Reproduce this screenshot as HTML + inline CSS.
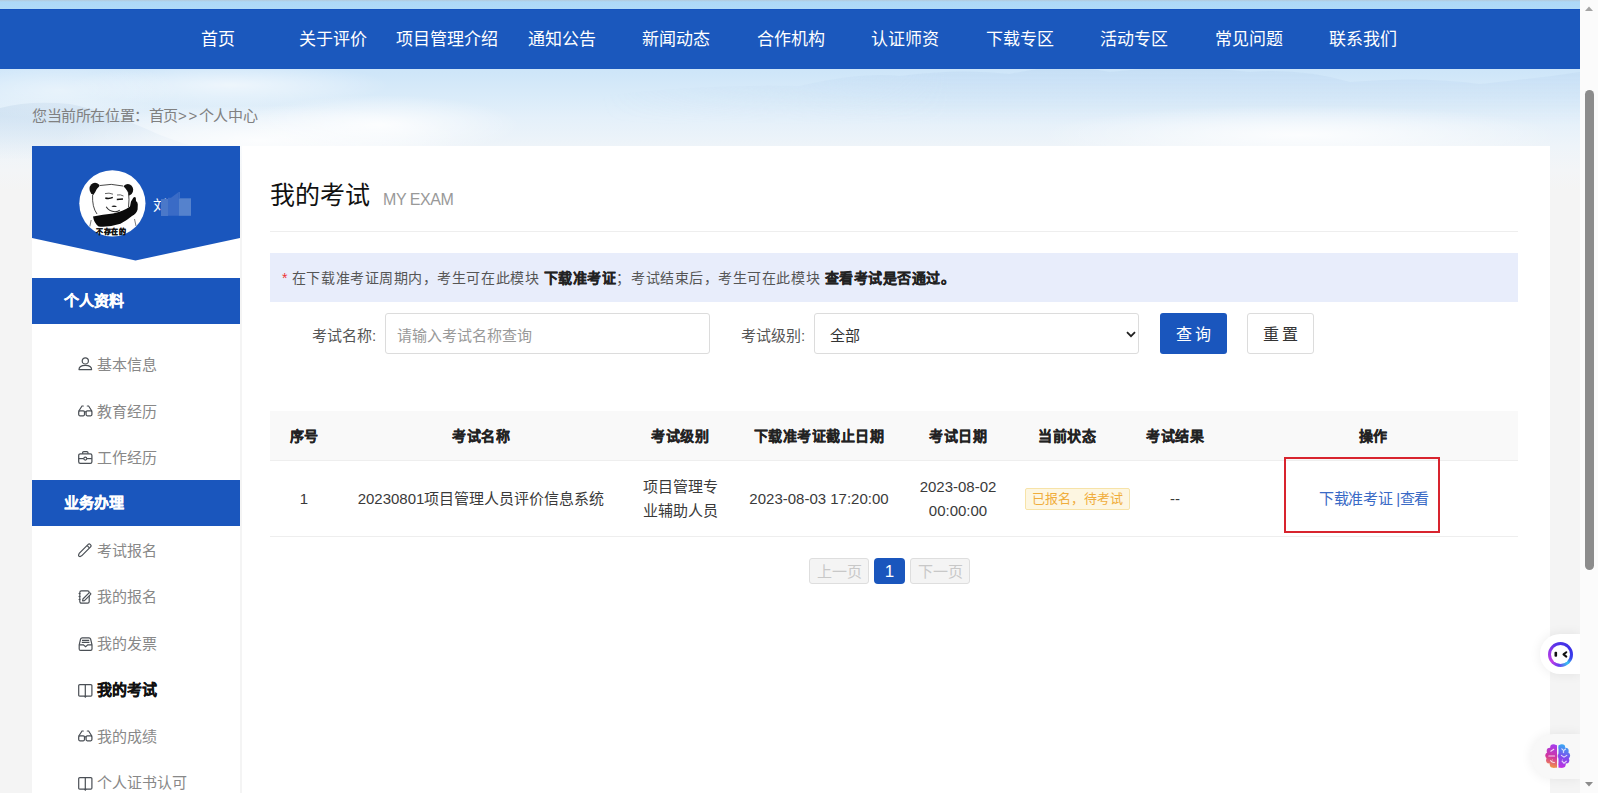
<!DOCTYPE html>
<html lang="zh-CN"><head><meta charset="utf-8">
<style>
*{margin:0;padding:0;box-sizing:border-box}
html,body{width:1598px;height:793px;overflow:hidden}
body{position:relative;background:#f4f4f4;font-family:"Liberation Sans",sans-serif;color:#333}
.abs{position:absolute}
#nav{left:0;top:9px;width:1580px;height:60px;background:#1b58bd;border-top:1px solid #1451be}
#nav .it{position:absolute;top:0;height:60px;line-height:60px;width:114.5px;text-align:center;color:#fff;font-size:17px}
#crumb{left:32px;top:105px;font-size:15px;letter-spacing:-0.4px;color:#808080;line-height:22px}
#side{left:32px;top:146px;width:208px;height:660px;background:#fff}
#main{left:242px;top:146px;width:1308px;height:660px;background:#fff}
#scroll{left:1580px;top:0;width:18px;height:793px;background:#fbfbfb}
.menu{position:absolute;left:0;width:208px;height:46px;background:#1a56bd;color:#fff;font-weight:bold;font-size:15px;line-height:46px;padding-left:32px}
.mt{position:absolute;left:65px;height:24px;line-height:24px;font-size:15px;color:#888;white-space:nowrap}
.ic{position:absolute}
.mi svg{position:absolute;left:0;top:5px}
.mi span{position:absolute;left:20px;top:0}
.th{position:absolute;top:279px;width:0;white-space:nowrap;font-size:14px;letter-spacing:0.5px;font-weight:bold;color:#222;line-height:22px;display:flex;justify-content:center}
.td{position:absolute;width:0;white-space:nowrap;font-size:15px;color:#3a3a3a;line-height:22px;display:flex;justify-content:center;text-align:center}
b,.menu,.th,.bold{-webkit-text-stroke:0.25px currentColor}
</style></head><body>
<svg id="sky" class="abs" style="left:0;top:0" width="1580" height="190" viewBox="0 0 1580 190">
  <defs>
    <linearGradient id="skyg" x1="0" y1="0" x2="0" y2="1">
      <stop offset="0" stop-color="#b4c8da"/><stop offset="0.01" stop-color="#acd8f8"/>
      <stop offset="0.36" stop-color="#cde5f9"/><stop offset="0.5" stop-color="#d9ebf9"/>
      <stop offset="0.62" stop-color="#e4f0fa"/><stop offset="0.77" stop-color="#eef4f9"/>
      <stop offset="0.9" stop-color="#f3f5f7"/><stop offset="1" stop-color="#f4f4f4"/>
    </linearGradient>
    <radialGradient id="cl" cx="0.5" cy="0.5" r="0.5"><stop offset="0" stop-color="#fff" stop-opacity="0.85"/><stop offset="1" stop-color="#fff" stop-opacity="0"/></radialGradient>
    <radialGradient id="mt" cx="0.5" cy="0.5" r="0.5"><stop offset="0" stop-color="#b9d5ef" stop-opacity="0.6"/><stop offset="1" stop-color="#b9d5ef" stop-opacity="0"/></radialGradient>
  </defs>
  <rect width="1580" height="190" fill="url(#skyg)"/>
  <linearGradient id="mtg" x1="0" y1="0" x2="0" y2="1"><stop offset="0" stop-color="#bcd6f0" stop-opacity="0.4"/><stop offset="1" stop-color="#bcd6f0" stop-opacity="0"/></linearGradient>
  <mask id="mfade"><linearGradient id="hf" gradientUnits="userSpaceOnUse" x1="600" y1="0" x2="950" y2="0"><stop offset="0" stop-color="#000"/><stop offset="1" stop-color="#fff"/><stop offset="1" stop-color="#fff"/></linearGradient><rect x="0" y="0" width="1580" height="190" fill="url(#hf)"/></mask>
  <path mask="url(#mfade)" d="M600 96 Q700 84 800 86 Q860 72 900 76 Q960 68 1010 74 Q1060 62 1110 72 Q1180 64 1250 72 Q1300 68 1350 82 Q1420 76 1480 84 Q1540 78 1580 72 V125 H600Z" fill="url(#mtg)"/>
  <ellipse cx="230" cy="85" rx="160" ry="22" fill="url(#cl)" opacity="0.7"/>
  <linearGradient id="lm" x1="0" y1="0" x2="0" y2="1"><stop offset="0" stop-color="#c6dbee" stop-opacity="0.7"/><stop offset="1" stop-color="#c6dbee" stop-opacity="0"/></linearGradient>
  <path d="M0 108 Q30 100 70 104 Q110 112 160 135 Q200 150 240 160 H0Z" fill="url(#lm)"/>
  <ellipse cx="260" cy="140" rx="200" ry="35" fill="url(#cl)"/>
  <ellipse cx="380" cy="125" rx="140" ry="30" fill="url(#cl)"/>
  <ellipse cx="1300" cy="135" rx="260" ry="30" fill="url(#cl)"/>
  <ellipse cx="60" cy="90" rx="120" ry="30" fill="url(#cl)" opacity="0.5"/>
</svg>
<div id="nav" class="abs">
  <div class="it" style="left:161px">首页</div>
  <div class="it" style="left:275.5px">关于评价</div>
  <div class="it" style="left:390px">项目管理介绍</div>
  <div class="it" style="left:504.5px">通知公告</div>
  <div class="it" style="left:619px">新闻动态</div>
  <div class="it" style="left:733.5px">合作机构</div>
  <div class="it" style="left:848px">认证师资</div>
  <div class="it" style="left:962.5px">下载专区</div>
  <div class="it" style="left:1077px">活动专区</div>
  <div class="it" style="left:1191.5px">常见问题</div>
  <div class="it" style="left:1306px">联系我们</div>
</div>
<div id="crumb" class="abs">您当前所在位置：首页<span style="letter-spacing:1.6px">&gt;&gt;</span>个人中心</div>

<div id="side" class="abs">
  <svg class="abs" style="left:0;top:0" width="208" height="115" viewBox="0 0 208 115"><polygon points="0,0 208,0 208,92 103.5,114.5 0,92" fill="#1a56bd"/></svg>
  <svg class="abs" style="left:47px;top:24px" width="67" height="67" viewBox="0 0 67 67">
    <defs><clipPath id="cc"><circle cx="33.4" cy="33.3" r="33.1"/></clipPath></defs>
    <circle cx="33.4" cy="33.3" r="33.1" fill="#fff"/>
    <g clip-path="url(#cc)">
      <ellipse cx="16" cy="19" rx="5.5" ry="6.2" fill="#111"/>
      <ellipse cx="48.8" cy="19.8" rx="5.4" ry="5.9" fill="#111"/>
      <path d="M21 15.5 Q32 13 44 16 Q49 20 49.8 26 Q50.5 33 49 38 L40 44 Q28 47 18 44 Q13.5 38 13.5 30 Q13.5 25 16 22.5 Q18 18 21 15.5Z" fill="#fff"/>
      <path d="M21 15.5 Q32 13 44 16 M49.5 22 Q50.5 30 49.5 37 M13.6 25 Q13 37 18 44" fill="none" stroke="#333" stroke-width="0.9"/>
      <path d="M26 23.6 q4 -1.2 8 0.6 M38 25 q3.5 -0.8 6.5 1" stroke="#555" stroke-width="0.9" fill="none"/>
      <path d="M26.3 28 q3.8 1.2 7.5 -0.6" stroke="#111" stroke-width="1.6" fill="none"/>
      <path d="M37.8 29.6 q3 -0.2 6.2 -0.6" stroke="#111" stroke-width="1.5" fill="none"/>
      <path d="M32.4 36.2 Q35 34.6 38 36.4 Q35 37.8 32.4 36.2Z" fill="#222"/>
      <path d="M27.2 36.8 Q30 41.5 36 41.8 Q39.5 41.6 40.8 40" stroke="#333" stroke-width="1.1" fill="none"/>
      <path d="M14 46.5 Q24 44.5 34 43.5 Q44 41.5 51 36.5 L52 31.5 L54.5 27.5 Q56.2 26.2 56.8 28 L57 31 Q58.8 32 58.8 34.5 L58.6 39.5 Q57.5 43.5 53 46 Q47 51 41.4 53.8 Q30 57.5 19.6 56.5 Q15 53 14 46.5Z" fill="#0b0b0b"/>
      <path d="M12.2 50 L10.8 56.5 M55.5 49 L57 56" stroke="#444" stroke-width="0.7"/>
    </g>
    <text x="32.2" y="63.8" font-size="7" font-weight="bold" text-anchor="middle" fill="#111" stroke="#111" stroke-width="0.25" font-family="Liberation Sans,sans-serif" letter-spacing="0.4">不存在的</text>
  </svg>
  <div class="abs" style="left:121px;top:48px;font-size:14px;color:#fff;line-height:22px">刘</div>
  <svg class="abs" style="left:129px;top:46px" width="33" height="25" viewBox="0 0 33 25"><rect x="0" y="7" width="7" height="17" fill="#4a78c9"/><polygon points="7,5.7 10,5.7 17.7,0 17.7,23.8 7,23.8" fill="#3a6bc6"/><rect x="17.7" y="6.3" width="12.3" height="17.5" fill="#5582cd"/><rect x="17.7" y="0" width="1.2" height="6.3" fill="#3f70c8"/></svg>
  <div class="menu" style="top:132px">个人资料</div>
  <svg class="ic" style="left:46px;top:211px" width="16" height="16" viewBox="0 0 16 16"><circle cx="7.3" cy="3.9" r="3.1" fill="none" stroke="#4a4f55" stroke-width="1.2"/><path d="M1 12.6 Q1 8.4 7.3 8.4 Q13.6 8.4 13.6 12.6 Z" fill="none" stroke="#4a4f55" stroke-width="1.2" stroke-linejoin="round"/></svg>
  <div class="mt" style="top:207px">基本信息</div>
  <svg class="ic" style="left:46px;top:259px" width="16" height="16" viewBox="0 0 16 16"><path d="M0.8 6 L4 1 L5.3 1 M13.8 6 L10.6 1 L9.3 1" fill="none" stroke="#4a4f55" stroke-width="1.2" stroke-linecap="round"/><rect x="0.7" y="5.8" width="5.8" height="5" rx="1.2" fill="none" stroke="#4a4f55" stroke-width="1.25"/><rect x="8.1" y="5.8" width="5.8" height="5" rx="1.2" fill="none" stroke="#4a4f55" stroke-width="1.25"/><path d="M6.5 6.8 H8.1" stroke="#4a4f55" stroke-width="1.2"/></svg>
  <div class="mt" style="top:254px">教育经历</div>
  <svg class="ic" style="left:46px;top:305px" width="16" height="16" viewBox="0 0 16 16"><path d="M4.6 2.8 V1.8 Q4.6 0.6 5.8 0.6 H8.8 Q10 0.6 10 1.8 V2.8" fill="none" stroke="#4a4f55" stroke-width="1.2"/><rect x="0.7" y="2.8" width="13.2" height="9.6" rx="1.6" fill="none" stroke="#4a4f55" stroke-width="1.25"/><path d="M0.7 7.6 H13.9" stroke="#4a4f55" stroke-width="1.2"/><circle cx="7.3" cy="7.6" r="1.5" fill="#fff" stroke="#4a4f55" stroke-width="1.1"/></svg>
  <div class="mt" style="top:300px">工作经历</div>
  <div class="menu" style="top:334px">业务办理</div>
  <svg class="ic" style="left:46px;top:397px" width="16" height="16" viewBox="0 0 16 16"><path d="M2.2 13.6 Q0.4 13.6 0.6 12 L1.2 10.4 L10.2 1.4 Q11.2 0.4 12.2 1.4 L12.6 1.8 Q13.6 2.8 12.6 3.8 L3.6 12.8 Z" fill="none" stroke="#4a4f55" stroke-width="1.2" stroke-linejoin="round"/><path d="M9.2 2.6 L11.4 4.8" stroke="#4a4f55" stroke-width="1.2"/></svg>
  <div class="mt" style="top:393px">考试报名</div>
  <svg class="ic" style="left:46px;top:444px" width="16" height="16" viewBox="0 0 16 16" style=""><rect x="1.8" y="0.8" width="9.4" height="12.4" rx="1.6" fill="none" stroke="#4a4f55" stroke-width="1.2"/><path d="M0.6 3.5 H2.4 M0.6 6.5 H2.4 M0.6 9.5 H2.4" stroke="#4a4f55" stroke-width="1.2"/><path d="M4.6 11 L4.9 9 L10.8 3.1 Q11.6 2.3 12.4 3.1 Q13.2 3.9 12.4 4.7 L6.5 10.6 Z" fill="#fff" stroke="#4a4f55" stroke-width="1.15" stroke-linejoin="round"/></svg>
  <div class="mt" style="top:439px">我的报名</div>
  <svg class="ic" style="left:46px;top:491px" width="16" height="16" viewBox="0 0 16 16"><path d="M1.2 7.8 L2.6 2 Q3 0.8 4.2 0.8 H11 Q12.2 0.8 12.6 2 L14 7.8 V12 Q14 13.4 12.6 13.4 H2.6 Q1.2 13.4 1.2 12 Z" fill="none" stroke="#4a4f55" stroke-width="1.2" stroke-linejoin="round"/><path d="M1.2 7.8 H5.4 L7.6 9.8 L9.8 7.8 H14" fill="none" stroke="#4a4f55" stroke-width="1.2"/><path d="M4 3.4 H11.2 M3.8 5.4 H11.4" stroke="#4a4f55" stroke-width="1.1"/></svg>
  <div class="mt" style="top:486px">我的发票</div>
  <svg class="ic" style="left:46px;top:538px" width="16" height="16" viewBox="0 0 16 16"><path d="M7.3 12.2 H1.8 Q0.7 12.2 0.7 11 V1.8 Q0.7 0.7 1.8 0.7 H7.3 Z M7.3 12.2 H12.8 Q13.9 12.2 13.9 11 V1.8 Q13.9 0.7 12.8 0.7 H7.3 Z" fill="none" stroke="#4a4f55" stroke-width="1.2" stroke-linejoin="round"/><path d="M6.4 12.4 L7.3 13.6 L8.2 12.4Z" fill="#4a4f55" stroke="#4a4f55" stroke-width="0.8"/></svg>
  <div class="mt bold" style="top:532px;color:#111;font-weight:bold">我的考试</div>
  <svg class="ic" style="left:46px;top:584px" width="16" height="16" viewBox="0 0 16 16"><path d="M0.8 6 L4 1 L5.3 1 M13.8 6 L10.6 1 L9.3 1" fill="none" stroke="#4a4f55" stroke-width="1.2" stroke-linecap="round"/><rect x="0.7" y="5.8" width="5.8" height="5" rx="1.2" fill="none" stroke="#4a4f55" stroke-width="1.25"/><rect x="8.1" y="5.8" width="5.8" height="5" rx="1.2" fill="none" stroke="#4a4f55" stroke-width="1.25"/><path d="M6.5 6.8 H8.1" stroke="#4a4f55" stroke-width="1.2"/></svg>
  <div class="mt" style="top:579px">我的成绩</div>
  <svg class="ic" style="left:46px;top:631px" width="16" height="16" viewBox="0 0 16 16"><path d="M7.3 12.2 H1.8 Q0.7 12.2 0.7 11 V1.8 Q0.7 0.7 1.8 0.7 H7.3 Z M7.3 12.2 H12.8 Q13.9 12.2 13.9 11 V1.8 Q13.9 0.7 12.8 0.7 H7.3 Z" fill="none" stroke="#4a4f55" stroke-width="1.2" stroke-linejoin="round"/><path d="M6.4 12.4 L7.3 13.6 L8.2 12.4Z" fill="#4a4f55" stroke="#4a4f55" stroke-width="0.8"/></svg>
  <div class="mt" style="top:625px">个人证书认可</div>
</div>
<div id="main" class="abs">
  <div class="abs" style="left:28px;top:31px;font-size:25px;color:#111;line-height:36px;white-space:nowrap">我的考试</div>
  <div class="abs" style="left:141px;top:43.5px;font-size:16px;letter-spacing:-0.45px;color:#999;line-height:20px;white-space:nowrap">MY EXAM</div>
  <div class="abs" style="left:28px;top:85px;width:1248px;height:1px;background:#eeeeee"></div>
  <div class="abs" style="left:28px;top:107px;width:1248px;height:49px;background:#e8edfb"></div>
  <div class="abs" style="left:40px;top:121px;font-size:14px;letter-spacing:0.55px;line-height:22px;color:#555;white-space:nowrap"><span style="color:#e33;letter-spacing:0">*</span> 在下载准考证周期内，考生可在此模块 <b style="color:#222">下载准考证</b>；考试结束后，考生可在此模块 <b style="color:#222">查看考试是否通过。</b></div>
  <div class="abs" style="left:70px;top:178.5px;font-size:15px;line-height:22px;color:#555;white-space:nowrap">考试名称:</div>
  <div class="abs" style="left:143px;top:167px;width:325px;height:41px;border:1px solid #dcdcdc;border-radius:3px"></div>
  <div class="abs" style="left:155px;top:178.5px;font-size:15px;line-height:22px;color:#999;white-space:nowrap">请输入考试名称查询</div>
  <div class="abs" style="left:499px;top:178.5px;font-size:15px;line-height:22px;color:#555;white-space:nowrap">考试级别:</div>
  <div class="abs" style="left:572px;top:167px;width:325px;height:41px;border:1px solid #dcdcdc;border-radius:3px"></div>
  <div class="abs" style="left:588px;top:178.5px;font-size:15px;line-height:22px;color:#333;white-space:nowrap">全部</div>
  <svg class="abs" style="left:884px;top:185px" width="10" height="7" viewBox="0 0 10 7"><path d="M1 1.2 L5 5.2 L9 1.2" fill="none" stroke="#222" stroke-width="1.8"/></svg>
  <div class="abs" style="left:918px;top:167px;width:67px;height:41px;background:#1a56bd;border-radius:3px;color:#fff;font-size:16px;line-height:43px;text-align:center;letter-spacing:3px;padding-left:3px">查询</div>
  <div class="abs" style="left:1005px;top:167px;width:67px;height:41px;border:1px solid #dcdcdc;border-radius:3px;color:#333;font-size:16px;line-height:41px;text-align:center;letter-spacing:3px;padding-left:3px">重置</div>

  <div class="abs" style="left:28px;top:265px;width:1248px;height:49px;background:#f9f9f9"></div>
  <div class="abs" style="left:28px;top:314px;width:1248px;height:1px;background:#eeeeee"></div>
  <div class="abs" style="left:28px;top:390px;width:1248px;height:1px;background:#eeeeee"></div>
  <div class="th" style="left:62px">序号</div>
  <div class="th" style="left:239px">考试名称</div>
  <div class="th" style="left:438px">考试级别</div>
  <div class="th" style="left:577px">下载准考证截止日期</div>
  <div class="th" style="left:716px">考试日期</div>
  <div class="th" style="left:825px">当前状态</div>
  <div class="th" style="left:933px">考试结果</div>
  <div class="th" style="left:1131px">操作</div>
  <div class="td" style="left:62px;top:342px">1</div>
  <div class="td" style="left:239px;top:342px">20230801项目管理人员评价信息系统</div>
  <div class="td" style="left:438px;top:328.5px;line-height:24.5px">项目管理专<br>业辅助人员</div>
  <div class="td" style="left:577px;top:342px">2023-08-03 17:20:00</div>
  <div class="td" style="left:716px;top:328.5px;line-height:24.5px">2023-08-02<br>00:00:00</div>
  <div class="abs" style="left:783px;top:342px;width:105px;height:22px;background:#fdf6e1;border:1px solid #f7e3a8;border-radius:2px;color:#f0ad3c;font-size:13px;line-height:20px;text-align:center;white-space:nowrap">已报名，待考试</div>
  <div class="td" style="left:933px;top:342px">--</div>
  <div class="td" style="left:1132px;top:342px;color:#3a6ac6;letter-spacing:-0.3px">下载准考证 |查看</div>
  <div class="abs" style="left:1042px;top:311px;width:156px;height:76px;border:2px solid #d8242e"></div>

  <div class="abs" style="left:567px;top:412px;width:60px;height:26px;background:#f4f4f4;border:1px solid #dedede;border-radius:3px;color:#c8c8c8;font-size:15px;line-height:26px;text-align:center">上一页</div>
  <div class="abs" style="left:632px;top:412px;width:31px;height:26px;background:#1a56bd;border-radius:4px;color:#fff;font-size:17px;line-height:27px;text-align:center">1</div>
  <div class="abs" style="left:668px;top:412px;width:60px;height:26px;background:#f4f4f4;border:1px solid #dedede;border-radius:3px;color:#c8c8c8;font-size:15px;line-height:26px;text-align:center">下一页</div>
</div>


<div class="abs" style="left:1540px;top:634px;width:40px;height:40px;border-radius:20px 0 0 20px;background:#fff;box-shadow:0 0 12px rgba(0,0,0,0.08)"></div>
<div class="abs" style="left:1548px;top:642px;width:25px;height:25px;border-radius:50%;background:conic-gradient(from 0deg,#4a34e8 0deg,#3d2fe6 60deg,#3a45ee 110deg,#38c4f0 140deg,#6a3cee 190deg,#c03ee6 230deg,#9a3ae8 280deg,#5a32e8 330deg,#4a34e8 360deg)"></div>
<div class="abs" style="left:1550.8px;top:644.8px;width:19.4px;height:19.4px;border-radius:50%;background:#fff"></div>
<svg class="abs" style="left:1548px;top:642px" width="25" height="25" viewBox="0 0 25 25">
  <rect x="6.5" y="9.8" width="2.6" height="5" rx="1" fill="#111"/>
  <path d="M18.3 10.2 L15.5 12.4 L18.3 14.6" fill="none" stroke="#111" stroke-width="2" stroke-linecap="round" stroke-linejoin="round"/>
</svg>
<div class="abs" style="left:1531px;top:734px;width:49px;height:45px;border-radius:22.5px 0 0 22.5px;background:#f8f8f8;box-shadow:0 0 12px rgba(0,0,0,0.07)"></div>
<svg class="abs" style="left:1545px;top:744px" width="26" height="25" viewBox="0 0 26 25">
  <defs><linearGradient id="bl" gradientUnits="userSpaceOnUse" x1="10" y1="2" x2="4" y2="24"><stop offset="0" stop-color="#a83ce8"/><stop offset="0.5" stop-color="#d2349f"/><stop offset="1" stop-color="#f5a13a"/></linearGradient>
  <linearGradient id="br" gradientUnits="userSpaceOnUse" x1="22" y1="2" x2="15" y2="24"><stop offset="0" stop-color="#3aa8f4"/><stop offset="0.5" stop-color="#7d4ced"/><stop offset="1" stop-color="#c52ee0"/></linearGradient></defs>
  <g fill="url(#bl)"><circle cx="8.5" cy="3.6" r="3.3"/><circle cx="5" cy="7" r="3.3"/><circle cx="3.4" cy="11.6" r="3.1"/><circle cx="4.4" cy="16.2" r="3.3"/><circle cx="8.2" cy="20.3" r="3.5"/><circle cx="8.8" cy="12" r="3.6"/><rect x="8" y="1.2" width="4" height="22.5"/></g><g fill="url(#br)"><circle cx="16.9" cy="3.6" r="3.3"/><circle cx="20.4" cy="7" r="3.3"/><circle cx="22.0" cy="11.6" r="3.1"/><circle cx="21.0" cy="16.2" r="3.3"/><circle cx="17.2" cy="20.3" r="3.5"/><circle cx="16.6" cy="12" r="3.6"/><rect x="13.5" y="1.2" width="4" height="22.5"/></g>
  <path d="M5.8 7.2 L8.8 5.2 M3.8 12 H9.6 M5.6 16.6 Q7 18.6 9.4 18.4 M16.8 4.8 L18.6 6.6 L20.6 5 M18.6 6.6 V8.6 M16.4 11.4 L19 13.2 L21.8 11.4 M17 17.2 L19 19.2 L21.4 17.2" fill="none" stroke="#fff" stroke-width="1.05" stroke-opacity="0.8" stroke-linecap="round"/>
</svg>
<div id="scroll" class="abs">
  <svg class="abs" style="left:4px;top:5px" width="10" height="7" viewBox="0 0 10 7"><path d="M1 6 L5 1.5 L9 6Z" fill="#a3a3a3"/></svg>
  <div class="abs" style="left:5px;top:90px;width:9px;height:480px;border-radius:4.5px;background:#8c8c8c"></div>
  <svg class="abs" style="left:4px;top:781px" width="10" height="7" viewBox="0 0 10 7"><path d="M1 1 L5 5.5 L9 1Z" fill="#8c8c8c"/></svg>
</div>
</body></html>
